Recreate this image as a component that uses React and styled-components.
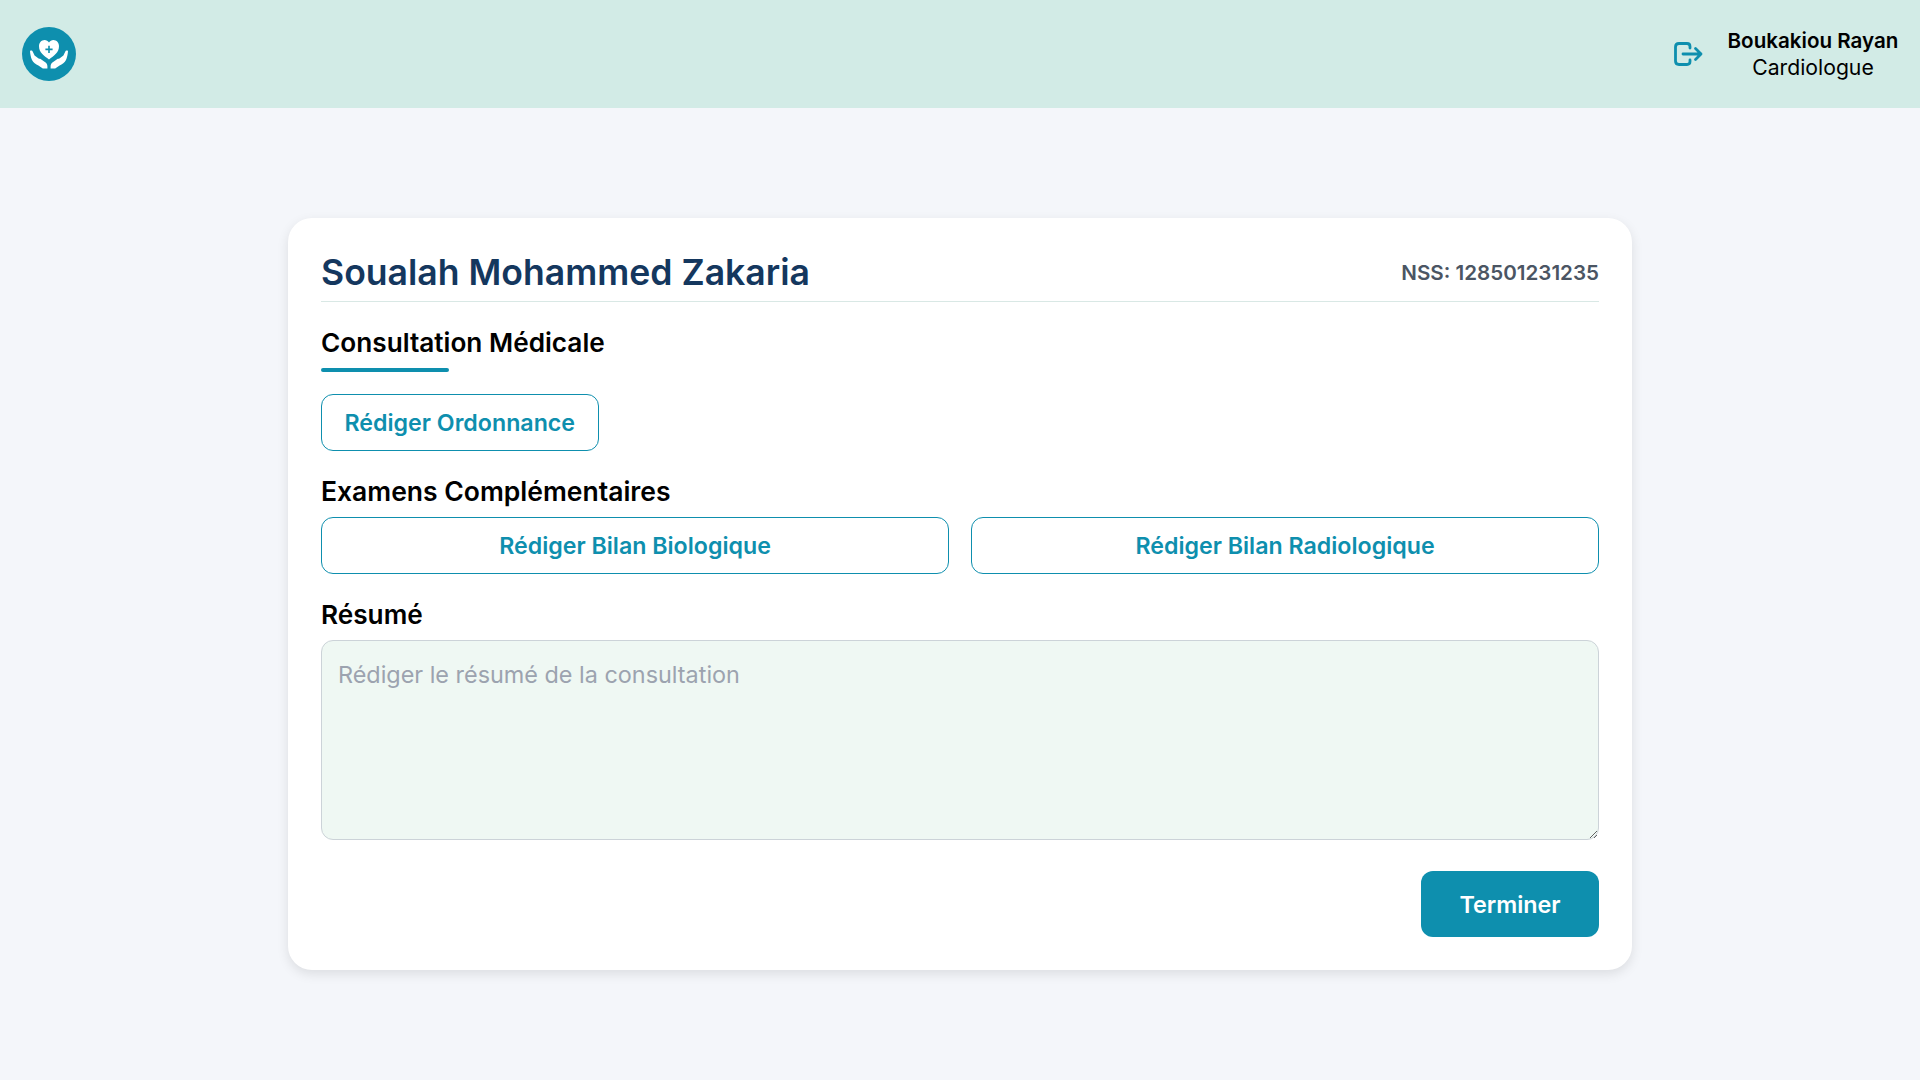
import React from 'react';
import styled, { createGlobalStyle } from 'styled-components';

const GlobalStyle = createGlobalStyle`
  html, body {
    margin: 0;
    padding: 0;
    background: #f4f6fa;
  }
  * {
    box-sizing: border-box;
  }
`;

const Page = styled.div`
  min-height: 1080px;
  background: #f4f6fa;
  font-family: Inter, "Liberation Sans", sans-serif;
  color: #000;
`;

const Header = styled.header`
  height: 108px;
  background: #d2ebe6;
  display: flex;
  justify-content: space-between;
  align-items: center;
  padding: 0 22px;
`;

const Logo = styled.svg`
  width: 54px;
  height: 54px;
  display: block;
`;

const UserArea = styled.div`
  display: flex;
  align-items: center;
  gap: 24px;
`;

const LogoutIcon = styled.svg`
  width: 32px;
  height: 32px;
  color: #0e8fae;
  display: block;
`;

const UserInfo = styled.div`
  display: flex;
  flex-direction: column;
  align-items: center;
  line-height: 27px;
  width: 170px;
  white-space: nowrap;
`;

const UserName = styled.div`
  font-size: 20.6px;
  font-weight: 600;
`;

const UserRole = styled.div`
  font-size: 21.2px;
  font-weight: 400;
`;

const Main = styled.main`
  display: flex;
  justify-content: center;
  padding-top: 110px;
`;

const Card = styled.section`
  width: 1344px;
  height: 752px;
  background: #fff;
  border-radius: 24px;
  box-shadow: 0 4px 12px rgba(0, 0, 0, 0.1);
  padding: 33px;
  display: flex;
  flex-direction: column;
`;

const PatientRow = styled.div`
  display: flex;
  justify-content: space-between;
  align-items: center;
  height: 51px;
  padding-bottom: 8px;
  border-bottom: 1px solid #d9e8e5;
`;

const PatientName = styled.h1`
  margin: 0;
  font-size: 35.6px;
  font-weight: 600;
  color: #14375e;
`;

const Nss = styled.div`
  font-size: 20.6px;
  font-weight: 600;
  color: #4b5563;
`;

const SectionTitle = styled.h2`
  margin: 0;
  font-size: 26.2px;
  font-weight: 600;
  line-height: 36px;
`;

const TopTitle = styled(SectionTitle)`
  margin-top: 23px;
`;

const Underline = styled.div`
  width: 128px;
  height: 4px;
  border-radius: 2px;
  background: #0e8fae;
  margin-top: 7px;
`;

const OutlineButton = styled.button`
  height: 57px;
  padding: 0 22px;
  background: #fff;
  border: 1px solid #0e8fae;
  border-radius: 12px;
  color: #0e8fae;
  font-family: inherit;
  font-size: 23.2px;
  font-weight: 600;
`;

const OrderButton = styled(OutlineButton)`
  align-self: flex-start;
  margin-top: 22px;
  padding: 0 22.5px;
`;

const ExamTitle = styled(SectionTitle)`
  margin-top: 22px;
  font-size: 26.5px;
`;

const ExamRow = styled.div`
  display: grid;
  grid-template-columns: 1fr 1fr;
  gap: 22px;
  margin-top: 8px;
`;

const ResumeTitle = styled(SectionTitle)`
  margin-top: 23px;
`;

const ResumeInput = styled.textarea`
  display: block;
  width: 100%;
  height: 200px;
  margin-top: 7px;
  padding: 19px 16px;
  background: #eff8f3;
  border: 1px solid #ccd3d8;
  border-radius: 12px;
  font-family: inherit;
  font-size: 23.4px;
  outline: none;

  &::placeholder {
    color: #9ca3af;
  }
`;

const Footer = styled.div`
  display: flex;
  justify-content: flex-end;
  margin-top: 31px;
`;

const FinishButton = styled.button`
  width: 178px;
  height: 66px;
  background: #0e8fae;
  border: none;
  border-radius: 12px;
  color: #fff;
  font-family: inherit;
  font-size: 23.3px;
  font-weight: 600;
`;

export default function App() {
  return (
    <Page>
      <GlobalStyle />
      <Header>
        <Logo viewBox="0 0 54 54">
          <circle cx="27" cy="27" r="27" fill="#0e8fae" />
          <path
            d="M27 32.5 C22 28.5 17 25.4 17 19.2 C17 15.8 19.4 13 22.6 13 C24.4 13 26 13.9 27 15.4 C28 13.9 29.6 13 31.4 13 C34.6 13 37 15.8 37 19.2 C37 25.4 32 28.5 27 32.5 Z"
            fill="#fff"
          />
          <path d="M27 18.8 V26 M23.4 22.4 H30.6" stroke="#0e8fae" strokeWidth="1.6" fill="none" />
          <path
            d="M8 24 C9 23.2 10.4 23.6 10.8 24.8 L12.6 28.6 L16.6 31.6 C17.4 32 18 31.8 18.6 32 L23.6 35.6 C24.8 36.6 25.4 38 25.4 39.4 L25.4 41.4 L20.8 41.4 L16.4 38.6 C13.8 37.2 11.2 35.8 10 33 C8.9 30.4 8.2 27.4 8 24 Z"
            fill="#fff"
          />
          <path
            d="M46 24 C45 23.2 43.6 23.6 43.2 24.8 L41.4 28.6 L37.4 31.6 C36.6 32 36 31.8 35.4 32 L30.4 35.6 C29.2 36.6 28.6 38 28.6 39.4 L28.6 41.4 L33.2 41.4 L37.6 38.6 C40.2 37.2 42.8 35.8 44 33 C45.1 30.4 45.8 27.4 46 24 Z"
            fill="#fff"
          />
        </Logo>
        <UserArea>
          <LogoutIcon viewBox="0 0 32 32" fill="none" stroke="currentColor" strokeWidth="2.8" strokeLinecap="round" strokeLinejoin="round">
            <path d="M18 10 V8.5 Q18 5.5 15 5.5 H7 Q3.5 5.5 3.5 9 V23 Q3.5 26.5 7 26.5 H15 Q18 26.5 18 23.5 V22" />
            <path d="M11 16 H29 M23.5 10.5 L29 16 L23.5 21.5" />
          </LogoutIcon>
          <UserInfo>
            <UserName>Boukakiou Rayan</UserName>
            <UserRole>Cardiologue</UserRole>
          </UserInfo>
        </UserArea>
      </Header>
      <Main>
        <Card>
          <PatientRow>
            <PatientName>Soualah Mohammed Zakaria</PatientName>
            <Nss>NSS: 128501231235</Nss>
          </PatientRow>
          <TopTitle>Consultation Médicale</TopTitle>
          <Underline />
          <OrderButton>Rédiger Ordonnance</OrderButton>
          <ExamTitle>Examens Complémentaires</ExamTitle>
          <ExamRow>
            <OutlineButton>Rédiger Bilan Biologique</OutlineButton>
            <OutlineButton>Rédiger Bilan Radiologique</OutlineButton>
          </ExamRow>
          <ResumeTitle>Résumé</ResumeTitle>
          <ResumeInput placeholder="Rédiger le résumé de la consultation" />
          <Footer>
            <FinishButton>Terminer</FinishButton>
          </Footer>
        </Card>
      </Main>
    </Page>
  );
}
